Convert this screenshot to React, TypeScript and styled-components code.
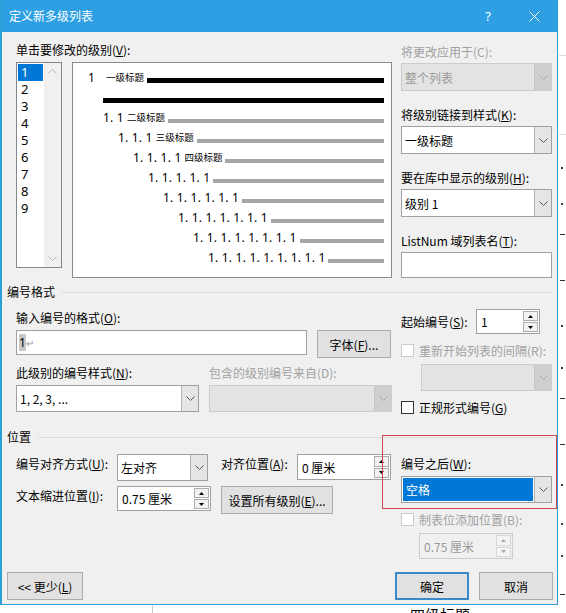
import React from "react";
import styled, { createGlobalStyle } from "styled-components";

const GlobalStyle = createGlobalStyle`
  html, body { margin: 0; padding: 0; background: #fff; }
  body {
    font-family: "Noto Sans CJK SC", "Noto Sans", sans-serif;
    font-size: 12px;
    color: #000;
  }
  * { box-sizing: border-box; }
  u { text-underline-offset: 1px; }
`;

const Screen = styled.div`
  width: 566px;
  height: 613px;
  overflow: hidden;
  display: grid;
  grid-template-columns: 558px 8px;
  grid-template-rows: 605px 8px;
  background: #fff;
`;

const Dialog = styled.div`
  position: relative;
  display: flex;
  flex-direction: column;
  border: 1px solid #2a9fd8;
  border-left-width: 2px;
  border-top: none;
  background: #f0f0f0;
`;

const TitleBar = styled.div`
  height: 32px;
  display: flex;
  align-items: center;
  background: #2d9fe2;
  color: #fff;
  padding-left: 7px;
`;

const Title = styled.div`
  flex: 1;
  font-size: 12px;
  line-height: 16px;
`;

const TitleButton = styled.div`
  width: 46px;
  height: 32px;
  display: flex;
  align-items: center;
  justify-content: center;
  font-family: "Noto Sans", sans-serif;
  font-size: 13px;
  color: #fff;
`;

const Body = styled.div`
  flex: 1;
  display: flex;
  flex-direction: column;
  padding: 10px 4px 4px 5px;
`;

const Label = styled.div<{ $disabled?: boolean; $w?: number }>`
  line-height: 16px;
  white-space: nowrap;
  color: ${(p) => (p.$disabled ? "#a0a0a0" : "#000")};
  ${(p) => (p.$w ? `width: ${p.$w}px; flex: none;` : "")}
`;

const TopRow = styled.div`
  display: flex;
  gap: 9px;
  padding-left: 9px;
`;

const LevelArea = styled.div`
  width: 376px;
  display: flex;
  flex-direction: column;
  gap: 4px;
`;

const LevelBoxes = styled.div`
  display: flex;
  gap: 10px;
  align-items: flex-start;
`;

const LevelList = styled.div`
  width: 46px;
  height: 206px;
  display: flex;
  border: 1px solid #828790;
  background: #fff;
`;

const LevelItems = styled.div`
  flex: 1;
  padding: 1px;
`;

const LevelItem = styled.div<{ $selected?: boolean }>`
  height: 17px;
  line-height: 17px;
  padding-left: 3px;
  font-family: "Noto Sans", sans-serif;
  font-size: 13px;
  background: ${(p) => (p.$selected ? "#0078d7" : "transparent")};
  color: ${(p) => (p.$selected ? "#fff" : "#000")};
`;

const ScrollTrack = styled.div`
  width: 17px;
  background: #f0f0f0;
  display: flex;
  flex-direction: column;
  justify-content: space-between;
  align-items: center;
  padding: 6px 0 6px;
`;

const Preview = styled.div`
  width: 320px;
  height: 216px;
  border: 1px solid #8a8a8a;
  background: #fff;
  padding: 4px 7px 0 0;
`;

const PreviewRow = styled.div<{ $indent: number }>`
  height: 20px;
  display: flex;
  align-items: center;
  padding-left: ${(p) => p.$indent}px;
`;

const LevelNumber = styled.span`
  font-family: "Noto Sans", sans-serif;
  font-size: 12px;
  letter-spacing: 0.2px;
  white-space: pre;
`;

const LevelTag = styled.span<{ $gap: number }>`
  font-size: 9.5px;
  margin-left: ${(p) => p.$gap}px;
  white-space: nowrap;
`;

const LevelBar = styled.div<{ $dark?: boolean }>`
  flex: 1;
  align-self: flex-end;
  margin: 0 0 4px 3px;
  height: ${(p) => (p.$dark ? 5 : 4)}px;
  background: ${(p) => (p.$dark ? "#000" : "#a6a6a6")};
`;

const SideColumn = styled.div`
  width: 151px;
  padding-top: 2px;
  display: flex;
  flex-direction: column;
  gap: 16px;
`;

const Field = styled.div`
  display: flex;
  flex-direction: column;
  gap: 3px;
`;

const ComboBox = styled.div<{ $disabled?: boolean; $w?: number; $h: number }>`
  display: flex;
  flex: none;
  width: ${(p) => (p.$w ? `${p.$w}px` : "100%")};
  height: ${(p) => p.$h}px;
  border: 1px solid ${(p) => (p.$disabled ? "#cccccc" : "#a0a0a0")};
  background: ${(p) => (p.$disabled ? "#e3e3e3" : "#fff")};
  color: ${(p) => (p.$disabled ? "#9a9a9a" : "#000")};
`;

const ComboText = styled.div<{ $highlight?: boolean }>`
  flex: 1;
  display: flex;
  align-items: center;
  padding-left: 3px;
  white-space: nowrap;
  margin: ${(p) => (p.$highlight ? "1px" : "0")};
  background: ${(p) => (p.$highlight ? "#0078d7" : "transparent")};
  color: ${(p) => (p.$highlight ? "#fff" : "inherit")};
`;

const ComboArrow = styled.div<{ $disabled?: boolean }>`
  width: 17px;
  display: flex;
  align-items: center;
  justify-content: center;
  background: ${(p) => (p.$disabled ? "#cfcfcf" : "#e5e5e5")};
  border-left: 1px solid ${(p) => (p.$disabled ? "#c4c4c4" : "#b4b4b4")};
`;

const TextBox = styled.div<{ $w?: number; $h: number }>`
  flex: none;
  display: flex;
  align-items: center;
  width: ${(p) => (p.$w ? `${p.$w}px` : "100%")};
  height: ${(p) => p.$h}px;
  border: 1px solid #a0a0a0;
  background: #fff;
  padding-left: 2px;
`;

const SelectedChar = styled.span`
  background: #c8c8c8;
  font-family: "Noto Sans", sans-serif;
`;

const ReturnMark = styled.span`
  color: #9a9a9a;
  font-size: 10px;
`;

const SpinBox = styled.div<{ $w: number; $h: number; $disabled?: boolean }>`
  flex: none;
  display: flex;
  width: ${(p) => p.$w}px;
  height: ${(p) => p.$h}px;
  border: 1px solid ${(p) => (p.$disabled ? "#cccccc" : "#a0a0a0")};
  background: ${(p) => (p.$disabled ? "#f0f0f0" : "#fff")};
  color: ${(p) => (p.$disabled ? "#9a9a9a" : "#000")};
  padding: 1px;
`;

const SpinText = styled.div`
  flex: 1;
  display: flex;
  align-items: center;
  padding-left: 3px;
  white-space: nowrap;
`;

const SpinButtons = styled.div`
  width: 15px;
  display: flex;
  flex-direction: column;
  gap: 1px;
`;

const SpinButton = styled.div<{ $disabled?: boolean }>`
  flex: 1;
  display: flex;
  align-items: center;
  justify-content: center;
  border: 1px solid ${(p) => (p.$disabled ? "#d8d8d8" : "#adadad")};
  background: ${(p) => (p.$disabled ? "#f4f4f4" : "#f2f2f2")};
`;

const Button = styled.button<{ $w: number; $default?: boolean }>`
  flex: none;
  width: ${(p) => p.$w}px;
  height: 28px;
  padding: 0;
  font-family: inherit;
  font-size: 12px;
  color: #000;
  background: #e1e1e1;
  border: ${(p) => (p.$default ? "2px solid #3a8ac9" : "1px solid #adadad")};
`;

const CheckRow = styled.div<{ $disabled?: boolean }>`
  display: flex;
  align-items: center;
  gap: 5px;
  height: 13px;
  color: ${(p) => (p.$disabled ? "#a0a0a0" : "#000")};
  white-space: nowrap;
`;

const CheckBox = styled.div<{ $disabled?: boolean }>`
  width: 13px;
  height: 13px;
  flex: none;
  background: #fff;
  border: 1px solid ${(p) => (p.$disabled ? "#cccccc" : "#333")};
`;

const SectionHeader = styled.div<{ $mt: number }>`
  display: flex;
  align-items: center;
  gap: 7px;
  margin-top: ${(p) => p.$mt}px;
  line-height: 16px;
`;

const HeaderRule = styled.div`
  flex: 1;
  height: 1px;
  background: #dcdcdc;
`;

const SectionRow = styled.div<{ $mt: number }>`
  display: flex;
  gap: 9px;
  padding-left: 9px;
  margin-top: ${(p) => p.$mt}px;
`;

const LeftPane = styled.div<{ $pt?: number }>`
  width: 376px;
  display: flex;
  flex-direction: column;
  padding-top: ${(p) => p.$pt ?? 0}px;
`;

const RightPane = styled.div`
  width: 151px;
  display: flex;
  flex-direction: column;
`;

const InlineRow = styled.div<{ $mt?: number; $gap?: number; $pl?: number; $center?: boolean }>`
  display: flex;
  align-items: ${(p) => (p.$center ? "center" : "flex-start")};
  gap: ${(p) => p.$gap ?? 10}px;
  margin-top: ${(p) => p.$mt ?? 0}px;
  padding-left: ${(p) => p.$pl ?? 0}px;
`;

const PairRow = styled.div<{ $mt: number }>`
  display: grid;
  grid-template-columns: 183px 183px;
  column-gap: 10px;
  margin-top: ${(p) => p.$mt}px;
`;

const RowLabel = styled(Label)<{ $ml?: number }>`
  padding-top: 2px;
  margin-left: ${(p) => p.$ml ?? 0}px;
`;

const Footer = styled.div`
  margin-top: auto;
  display: flex;
  justify-content: space-between;
`;

const FooterRight = styled.div`
  display: flex;
  gap: 10px;
`;

const Annotation = styled.div`
  position: absolute;
  left: 380px;
  top: 435px;
  width: 175px;
  height: 74px;
  border: 1px solid #d2464c;
  pointer-events: none;
`;

const DocMargin = styled.div`
  background: #fff;
`;

const DocBottom = styled.div`
  grid-column: 1 / 3;
  display: flex;
  padding-left: 152px;
  overflow: hidden;
  background: #fff;
`;

const DocRule = styled.div`
  width: 1px;
  background: #c8c8c8;
`;

const DocText = styled.div`
  margin: 2px 0 0 257px;
  font-size: 15px;
  line-height: 15px;
  white-space: nowrap;
`;

const Chevron = ({ up, color = "#555" }: { up?: boolean; color?: string }) => (
  <svg width="9" height="5" viewBox="0 0 9 5">
    <polyline
      points={up ? "0.5,4.5 4.5,0.5 8.5,4.5" : "0.5,0.5 4.5,4.5 8.5,0.5"}
      fill="none"
      stroke={color}
      strokeWidth="1"
    />
  </svg>
);

const Triangle = ({ up, color = "#000" }: { up?: boolean; color?: string }) => (
  <svg width="5" height="3" viewBox="0 0 5 3">
    <polygon points={up ? "0,3 2.5,0 5,3" : "0,0 5,0 2.5,3"} fill={color} />
  </svg>
);

const CloseIcon = () => (
  <svg width="11" height="11" viewBox="0 0 11 11">
    <path d="M0.5 0.5 L10.5 10.5 M10.5 0.5 L0.5 10.5" stroke="#fff" strokeWidth="1" />
  </svg>
);

const Combo = ({
  text,
  disabled,
  w,
  h = 28,
  highlight,
}: {
  text?: string;
  disabled?: boolean;
  w?: number;
  h?: number;
  highlight?: boolean;
}) => (
  <ComboBox $disabled={disabled} $w={w} $h={h}>
    <ComboText $highlight={highlight}>{text}</ComboText>
    <ComboArrow $disabled={disabled}>
      <Chevron color={disabled ? "#a8a8a8" : "#555"} />
    </ComboArrow>
  </ComboBox>
);

const Spin = ({ text, w, h, disabled }: { text: string; w: number; h: number; disabled?: boolean }) => (
  <SpinBox $w={w} $h={h} $disabled={disabled}>
    <SpinText>{text}</SpinText>
    <SpinButtons>
      <SpinButton $disabled={disabled}>
        <Triangle up color={disabled ? "#a8a8a8" : "#000"} />
      </SpinButton>
      <SpinButton $disabled={disabled}>
        <Triangle color={disabled ? "#a8a8a8" : "#000"} />
      </SpinButton>
    </SpinButtons>
  </SpinBox>
);

const Check = ({ disabled, children }: { disabled?: boolean; children: React.ReactNode }) => (
  <CheckRow $disabled={disabled}>
    <CheckBox $disabled={disabled} />
    <span>{children}</span>
  </CheckRow>
);

type PreviewLine = { indent: number; num?: string; tag?: string; gap?: number; dark?: boolean };

const previewLines: PreviewLine[] = [
  { indent: 15, num: "1", tag: "一级标题", gap: 11, dark: true },
  { indent: 27, dark: true },
  { indent: 30, num: "1. 1", tag: "二级标题", gap: 3 },
  { indent: 45, num: "1. 1. 1", tag: "三级标题", gap: 3 },
  { indent: 60, num: "1. 1. 1. 1", tag: "四级标题", gap: 3 },
  { indent: 75, num: "1. 1. 1. 1. 1" },
  { indent: 90, num: "1. 1. 1. 1. 1. 1" },
  { indent: 105, num: "1. 1. 1. 1. 1. 1. 1" },
  { indent: 120, num: "1. 1. 1. 1. 1. 1. 1. 1" },
  { indent: 135, num: "1. 1. 1. 1. 1. 1. 1. 1. 1" },
];

const docMarks = [
  { y: 167, dash: false },
  { y: 203, dash: false },
  { y: 234, dash: true },
  { y: 280, dash: true },
  { y: 325, dash: false },
  { y: 367, dash: false },
  { y: 398, dash: true },
  { y: 444, dash: true },
  { y: 484, dash: false },
  { y: 523, dash: false },
  { y: 555, dash: false },
  { y: 594, dash: true },
];

const App = () => {
  return (
    <>
      <GlobalStyle />
      <Screen>
        <Dialog>
          <TitleBar>
            <Title>定义新多级列表</Title>
            <TitleButton>?</TitleButton>
            <TitleButton>
              <CloseIcon />
            </TitleButton>
          </TitleBar>

          <Body>
            <TopRow>
              <LevelArea>
                <Label>
                  单击要修改的级别(<u>V</u>):
                </Label>
                <LevelBoxes>
                  <LevelList>
                    <LevelItems>
                      {[1, 2, 3, 4, 5, 6, 7, 8, 9].map((n) => (
                        <LevelItem key={n} $selected={n === 1}>
                          {n}
                        </LevelItem>
                      ))}
                    </LevelItems>
                    <ScrollTrack>
                      <Chevron up color="#b8b8b8" />
                      <Chevron color="#b8b8b8" />
                    </ScrollTrack>
                  </LevelList>
                  <Preview>
                    {previewLines.map((l, i) => (
                      <PreviewRow key={i} $indent={l.indent}>
                        {l.num && <LevelNumber>{l.num}</LevelNumber>}
                        {l.tag && <LevelTag $gap={l.gap ?? 3}>{l.tag}</LevelTag>}
                        <LevelBar $dark={l.dark} />
                      </PreviewRow>
                    ))}
                  </Preview>
                </LevelBoxes>
              </LevelArea>

              <SideColumn>
                <Field>
                  <Label $disabled>将更改应用于(C):</Label>
                  <Combo text="整个列表" disabled />
                </Field>
                <Field>
                  <Label>
                    将级别链接到样式(<u>K</u>):
                  </Label>
                  <Combo text="一级标题" />
                </Field>
                <Field>
                  <Label>
                    要在库中显示的级别(<u>H</u>):
                  </Label>
                  <Combo text="级别 1" />
                </Field>
                <Field>
                  <Label>
                    ListNum 域列表名(<u>T</u>):
                  </Label>
                  <TextBox $h={26} />
                </Field>
              </SideColumn>
            </TopRow>

            <SectionHeader $mt={6}>
              编号格式
              <HeaderRule />
            </SectionHeader>

            <SectionRow $mt={9}>
              <LeftPane $pt={1}>
                <Label>
                  输入编号的格式(<u>O</u>):
                </Label>
                <InlineRow $mt={4}>
                  <TextBox $w={291} $h={25}>
                    <SelectedChar>1</SelectedChar>
                    <ReturnMark>↵</ReturnMark>
                  </TextBox>
                  <Button $w={74}>
                    字体(<u>F</u>)...
                  </Button>
                </InlineRow>
                <PairRow $mt={7}>
                  <Label>
                    此级别的编号样式(<u>N</u>):
                  </Label>
                  <Label $disabled>包含的级别编号来自(D):</Label>
                </PairRow>
                <PairRow $mt={4}>
                  <Combo text="1, 2, 3, ..." h={27} />
                  <Combo disabled h={27} />
                </PairRow>
              </LeftPane>

              <RightPane>
                <InlineRow $gap={0} $center>
                  <Label $w={75}>
                    起始编号(<u>S</u>):
                  </Label>
                  <Spin text="1" w={64} h={25} />
                </InlineRow>
                <InlineRow $mt={10} $gap={0}>
                  <Check disabled>重新开始列表的间隔(R):</Check>
                </InlineRow>
                <InlineRow $mt={7} $gap={0} $pl={20}>
                  <Combo disabled w={131} h={27} />
                </InlineRow>
                <InlineRow $mt={10} $gap={0}>
                  <Check>
                    正规形式编号(<u>G</u>)
                  </Check>
                </InlineRow>
              </RightPane>
            </SectionRow>

            <SectionHeader $mt={15}>
              位置
              <HeaderRule />
            </SectionHeader>

            <SectionRow $mt={9}>
              <LeftPane>
                <InlineRow $gap={0}>
                  <RowLabel $w={101}>
                    编号对齐方式(<u>U</u>):
                  </RowLabel>
                  <Combo text="左对齐" w={91} h={27} />
                  <RowLabel $w={76} $ml={13}>
                    对齐位置(<u>A</u>):
                  </RowLabel>
                  <Spin text="0 厘米" w={94} h={26} />
                </InlineRow>
                <InlineRow $mt={5}>
                  <RowLabel $w={91}>
                    文本缩进位置(<u>I</u>):
                  </RowLabel>
                  <Spin text="0.75 厘米" w={94} h={25} />
                  <Button $w={112}>
                    设置所有级别(<u>E</u>)...
                  </Button>
                </InlineRow>
              </LeftPane>

              <RightPane>
                <RowLabel>
                  编号之后(<u>W</u>):
                </RowLabel>
                <InlineRow $mt={4} $gap={0}>
                  <Combo text="空格" h={27} highlight />
                </InlineRow>
                <InlineRow $mt={10} $gap={0}>
                  <Check disabled>制表位添加位置(B):</Check>
                </InlineRow>
                <InlineRow $mt={7} $gap={0} $pl={18}>
                  <Spin text="0.75 厘米" w={94} h={26} disabled />
                </InlineRow>
              </RightPane>
            </SectionRow>

            <Footer>
              <Button $w={76}>
                &lt;&lt; 更少(<u>L</u>)
              </Button>
              <FooterRight>
                <Button $w={74} $default>
                  确定
                </Button>
                <Button $w={74}>取消</Button>
              </FooterRight>
            </Footer>
          </Body>

          <Annotation />
        </Dialog>

        <DocMargin>
          <svg width="8" height="605" viewBox="0 0 8 605">
            <rect x="1" y="55" width="7" height="1" fill="#dedede" />
            <rect x="1" y="134" width="7" height="1" fill="#dedede" />
            {docMarks.map((m) =>
              m.dash ? (
                <rect key={m.y} x="2" y={m.y} width="5" height="1" fill="#333" />
              ) : (
                <rect key={m.y} x="3" y={m.y} width="2" height="2" fill="#333" />
              )
            )}
          </svg>
        </DocMargin>

        <DocBottom>
          <DocRule />
          <DocText>四级标题</DocText>
        </DocBottom>
      </Screen>
    </>
  );
};

export default App;
